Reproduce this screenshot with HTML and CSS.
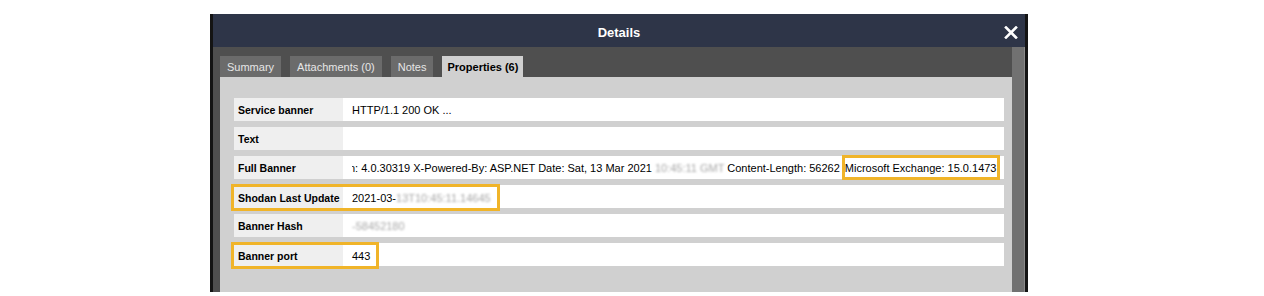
FILE: index.html
```html
<!DOCTYPE html>
<html lang="en">
  <head>
    <meta charset="UTF-8" />
    <meta name="viewport" content="width=device-width, initial-scale=1.0" />
    <title>Details</title>
    <link rel="stylesheet" href="styles.css">
  </head>
  <body>
    <div class="dialog">
      <div class="titlebar">
        <span></span>
        <h1 class="title">Details</h1>
        <button class="close" aria-label="Close">
          <svg width="14" height="13" viewBox="0 0 14 13">
            <path d="M2 1.5 L12 11.5 M12 1.5 L2 11.5" stroke="#fff" stroke-width="2.6" stroke-linecap="square" fill="none" />
          </svg>
        </button>
      </div>

      <div class="body">
        <div class="main">
          <div class="tabs">
            <div class="tab">Summary</div>
            <div class="tab">Attachments (0)</div>
            <div class="tab">Notes</div>
            <div class="tab active">Properties (6)</div>
          </div>

          <div class="panel">
            <div class="row">
              <div class="label">Service banner</div>
              <div class="value">HTTP/1.1 200 OK ...</div>
            </div>
            <div class="row">
              <div class="label">Text</div>
              <div class="value"></div>
            </div>
            <div class="row">
              <div class="label">Full Banner</div>
              <div class="value">
                <span class="cut"><span class="scrolled">n: 4.0.30319 X-Powered-By: ASP.NET Date: Sat, 13 Mar 2021 <span class="blur">10:45:11 GMT</span> Content-Length: 56262</span></span>
                <span class="mark mark-inline">Microsoft Exchange: 15.0.1473</span>
              </div>
            </div>
            <div class="row">
              <div class="mark mark-cells">
                <div class="label">Shodan Last Update</div>
                <div class="value">2021-03-<span class="blur">13T10:45:11.14645</span></div>
              </div>
              <div class="value fill"></div>
            </div>
            <div class="row">
              <div class="label">Banner Hash</div>
              <div class="value"><span class="blur">-58452180</span></div>
            </div>
            <div class="row">
              <div class="mark mark-cells">
                <div class="label">Banner port</div>
                <div class="value">443</div>
              </div>
              <div class="value fill"></div>
            </div>
          </div>
        </div>
        <div class="scrollbar"></div>
      </div>
    </div>
  </body>
</html>
```

FILE: styles.css
```css
body {
  margin: 0;
  background: #ffffff;
  font-family: "Liberation Sans", Arial, sans-serif;
  font-size: 11px;
  color: #000;
}

.dialog {
  margin: 14px 0 0 210px;
  width: 818px;
  height: 278px;
  box-sizing: border-box;
  border-left: 3px solid #141414;
  border-right: 3px solid #141414;
  display: flex;
  flex-direction: column;
}

.titlebar {
  height: 33px;
  flex: none;
  box-sizing: border-box;
  padding-top: 3px;
  background: #2e3548;
  display: grid;
  grid-template-columns: 1fr auto 1fr;
  align-items: center;
}
.title {
  margin: 0;
  font-size: 13px;
  font-weight: bold;
  color: #fff;
}
.close {
  justify-self: end;
  margin-right: 7px;
  padding: 0;
  border: 0;
  background: none;
  display: flex;
}

.body {
  flex: 1;
  display: flex;
  min-height: 0;
}
.main {
  flex: 1;
  background: #4f4f4f;
  padding: 9px 0 0 7px;
  display: flex;
  flex-direction: column;
}
.scrollbar {
  width: 12px;
  background: #717171;
  border-right: 1px solid #8a8a8a;
}

.tabs {
  display: flex;
  height: 21px;
  gap: 9px;
}
.tab {
  background: #6b6b6b;
  color: #e6e6e6;
  padding: 0 7px;
  line-height: 23px;
}
.tab.active {
  background: #d0d0d0;
  color: #000;
  font-weight: bold;
  padding: 0 5px;
}

.panel {
  flex: 1;
  background: #d0d0d0;
  padding: 21px 8px 0 14px;
}

.row {
  display: flex;
  height: 23px;
  margin-bottom: 6px;
}
.label {
  width: 109px;
  flex: none;
  box-sizing: border-box;
  padding-left: 4px;
  background: #efefef;
  font-size: 10.5px;
  font-weight: bold;
  white-space: nowrap;
  display: flex;
  align-items: center;
}
.value {
  flex: 1;
  background: #fff;
  padding-left: 9px;
  display: flex;
  align-items: center;
  white-space: nowrap;
}
.cut {
  overflow: hidden;
  display: flex;
}
.scrolled {
  margin-left: -3px;
  white-space: pre;
}
.blur {
  color: #a8a8a8;
  filter: blur(1.3px);
}

.mark {
  border: 3px solid #f0b429;
}
.mark-inline {
  box-sizing: border-box;
  height: 25px;
  margin: -1px 0 -1px 2px;
  padding: 0;
  display: flex;
  align-items: center;
}
.mark-cells {
  display: flex;
  flex: none;
  margin: -1px 0 -3px -3px;
}
.mark-cells .value {
  flex: none;
  padding-right: 6px;
}
.fill {
  padding: 0;
}
```
